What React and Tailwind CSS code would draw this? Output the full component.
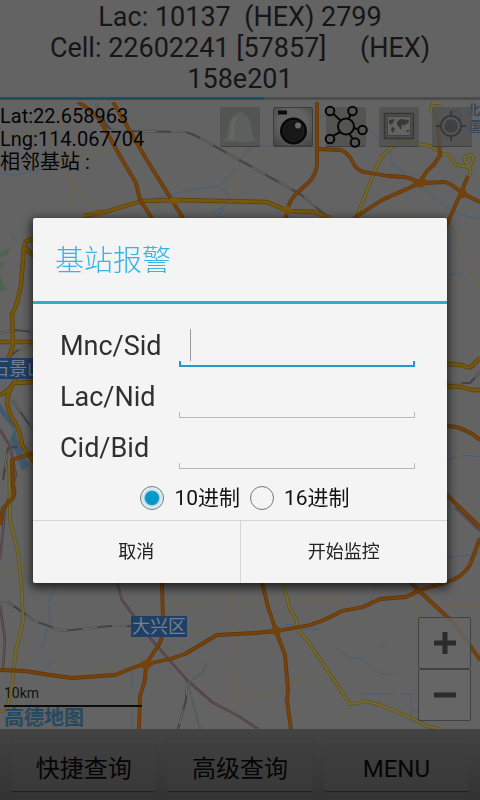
import { useState } from "react";

const ORANGE_ROADS = [
  "M78 102 L90 110 L100 120 L120 156 L136 183 L140 200 L152 218",
  "M113 102 L145 157 L183 218",
  "M317 102 V165 Q316 175 308 183 L295 195 Q287 204 286 218",
  "M318 149 L340 150 Q348 152 352 161 Q357 171 364 172 L388 176 L405 177 L424 183 L445 182 Q452 184 462 193 L480 202",
  "M438 122 L440 155 Q434 166 428 170 L418 184 L382 200 L354 218",
  "M468 176 L460 195 L446 226",
  "M33 453 L12 460 L13 485 Q16 492 13 498 L3 508 L0 525",
  "M0 670 L25 671 L50 675 L72 678 L115 675 L135 667 L146 664 L170 659 L185 654 L217 635 L255 633 L277 631 L310 625 L324 620 L342 611 L363 607 L380 599 L406 597 L420 590 L447 582 Q462 578 470 565 L480 538",
  "M162 582 L163 622 Q164 640 156 649 L146 664 L145 680 L140 696 L139 729",
  "M262 582 L268 607 L276 631 L285 655 L288 690 L287 700 L291 729",
  "M410 582 L430 601 L455 624 L480 660",
  "M447 426 Q464 426 480 440",
  "M447 495 L480 527",
];

const YELLOW_ROADS = [
  "M84 216 L105 212 L142 201 L175 200 L267 202 L288 211 L314 212 L330 218",
  "M34 239 Q25 239 24 247 L21 285 Q18 304 12 314 L13 345 L9 358 L15 381 Q8 390 7 402 Q9 415 15 422 Q21 433 22 445 L34 462",
  "M0 342 H34",
  "M34 382 L14 383 Q8 392 0 395",
  "M24 247 L34 256",
  "M447 364 L462 365 Q470 370 474 364 L480 358",
  "M447 386 L462 387 L472 390 H480",
];

const LIGHT_ROADS = [
  "M356 218 L362 203 L376 168 Q381 157 386 152 L400 141 L430 146 L443 154 L449 155 L456 165 L469 167 Q477 156 470 155 Q461 157 466 163 Q472 168 470 177",
  "M441 103 H433 L431 110 L438 122",
  "M9 459 L10 520 L18 553 L22 590 L23 622 L16 650 L12 686 L7 709 L0 712",
  "M283 582 L290 610 L296 618 L298 630 L308 641 L330 674 L350 704 Q358 704 365 701 L380 705 L410 717 L426 726 L440 729",
];

const FAINT_ROADS = [
  "M0 138 L48 130 L80 112",
  "M49 130 L58 160 L70 178 L97 213",
  "M72 180 L74 218",
  "M58 165 L110 151 L142 141",
  "M240 102 L237 175 L235 218",
  "M366 102 L385 132 M405 102 L404 140",
  "M390 176 L402 200 L409 218",
  "M447 228 Q459 227 461 238 L463 249 Q469 262 471 278 L480 291",
  "M165 604 L190 606 L205 603 L235 603 L240 606 L290 601 L340 601 L348 582",
  "M230 585 L231 603 L238 645 L235 729",
  "M187 633 L215 634",
  "M70 674 L100 670 L140 662",
  "M240 700 L256 700 L310 676 L330 674",
  "M350 704 L339 729",
  "M402 585 L415 607 L480 605",
  "M415 607 L420 640 L429 660 V729",
  "M0 653 L24 665",
  "M0 572 L33 568",
  "M447 470 L473 442",
];

const WATER = [
  "M0 173 L15 175 L45 169",
  "M150 200 L190 190 L220 186 L235 171 L245 153 L254 146 L318 146",
  "M320 116 L350 119 L370 130 L382 143 L390 152 L392 164 L412 177 L440 203 L458 214 L480 219",
  "M222 187 L232 202 M228 204 L213 213 M224 205 L218 217",
  "M449 275 L461 273 L469 281",
  "M447 460 L463 455 L480 457",
  "M447 557 L463 556 L480 553",
  "M337 648 L350 658 L360 658 L380 674 L395 675",
  "M275 629 L290 624 L300 629 L322 629",
  "M378 647 L387 644",
  "M361 694 H394 M400 694 H411 V710 H420",
  "M57 583 L48 603 L50 620 L42 648",
  "M55 658 L40 676 M36 690 L21 729",
  "M132 672 V690 M132 709 V727",
  "M380 582 L370 601",
  "M11 232 L14 240",
];

const RAILS = [
  "M96 104 L105 122 Q108 131 120 131 L185 132 Q191 133 200 138 L300 194 L329 218",
  "M0 333 L15 330 L33 332",
  "M33 346 L18 350 L9 357",
  "M447 383 H470 L480 372",
  "M0 602 H8 L35 621 L62 631 L110 626 H132",
  "M187 680 L186 700 L178 729",
  "M12 400 L33 430",
  "M33 445 L8 448 L3 480",
];

const RED_RAILS = [
  "M0 430 L10 446 L16 475 L5 510 L0 560",
  "M117 582 L122 600 L150 638 L187 680 L212 702 L240 717 L258 729",
  "M0 605 L5 640 L3 670",
  "M455 507 L480 531",
];

function Roads({ paths, ...stroke }) {
  return (
    <g fill="none" strokeLinejoin="round" {...stroke}>
      {paths.map((d) => (
        <path key={d} d={d} />
      ))}
    </g>
  );
}

function MapCanvas() {
  return (
    <svg
      className="absolute inset-0 h-full w-full"
      viewBox="0 102 480 627"
      preserveAspectRatio="xMidYMid slice"
      aria-hidden="true"
    >
      <path
        d="M0 252 L10 248 L7 255 L0 257Z M0 262 L4 264 L3 268 L0 267Z M0 274 L3 284 L7 290 L0 291Z"
        fill="#4f634e"
      />
      <path
        d="M0 404 L13 422 L17 438 L22 450 L29 466 L22 471 L17 456 L10 440 L14 430 L0 412Z"
        fill="#3f586d"
      />
      <Roads paths={WATER} stroke="#485f76" strokeWidth="1" />
      <Roads paths={FAINT_ROADS} stroke="#6b6450" strokeWidth="1.4" />
      <Roads paths={RAILS} stroke="#444444" strokeWidth="2.2" />
      <Roads
        paths={RAILS}
        stroke="#747474"
        strokeWidth="1"
        strokeDasharray="15 15"
      />
      <Roads paths={RED_RAILS} stroke="#4b393c" strokeWidth="2.4" />
      <Roads paths={RED_RAILS} stroke="#705f62" strokeWidth="0.8" />
      <path
        d="M207 663 L203 672 L188 683 L200 729"
        fill="none"
        stroke="#565c5b"
        strokeWidth="2.5"
        strokeDasharray="5 1"
      />
      <Roads paths={LIGHT_ROADS} stroke="#5c531d" strokeWidth="3.4" />
      <Roads paths={LIGHT_ROADS} stroke="#746a32" strokeWidth="2" />
      <Roads paths={YELLOW_ROADS} stroke="#5a4106" strokeWidth="4.4" />
      <Roads paths={YELLOW_ROADS} stroke="#76570d" strokeWidth="3" />
      <Roads paths={ORANGE_ROADS} stroke="#5e3408" strokeWidth="3.8" />
      <Roads paths={ORANGE_ROADS} stroke="#74420d" strokeWidth="2.6" />
      <g fill="#74420d">
        <path d="M412 183 L424 178 L430 183 L420 188Z" />
        <path d="M456 189 L464 188 L468 194 L462 199Z" />
        <path d="M138 664 L147 659 L155 663 L146 671Z" />
        <path d="M269 631 L276 625 L283 630 L277 637Z" />
      </g>
      <g fill="#76570d">
        <path d="M90 214 L98 209 L107 213 L98 217Z" />
        <path d="M166 201 L175 196 L181 202 L174 204Z" />
        <path d="M280 208 L288 205 L294 212 L287 215Z" />
      </g>

      {/* City marker */}
      <circle cx="455" cy="116" r="7" fill="#2d4a68" />
      <path d="M451 117 L458 111 M455 120 L459 113" stroke="#647384" strokeWidth="1.5" />

      <g fontFamily="'Noto Sans CJK SC', sans-serif">
        <text x="467" y="114" fontSize="13" fill="#26394e">
          北
        </text>
        <path d="M480 120.5 H470.5 V132.5 H480" fill="none" stroke="#34475c" />
        <text x="470" y="130" fontSize="10" fill="#26394e">
          国
        </text>
        <rect x="-10" y="358" width="60" height="21" fill="#1f4064" />
        <text x="-9" y="375" fontSize="18" fill="#74808d">
          石景山
        </text>
        <rect x="131" y="616" width="56" height="21" fill="#1f4064" />
        <text x="132" y="633" fontSize="18" fill="#74808d">
          大兴区
        </text>
      </g>
    </svg>
  );
}

function BellIcon() {
  return (
    <svg viewBox="0 0 40 40" className="h-10 w-10" aria-hidden="true">
      <path
        d="M16 8 Q16 5 20 5 Q24 5 24 8 C31 10 31 17 32 24 Q33 30 37 34 Q30 35 20 35 Q10 35 3 34 Q7 30 8 24 C9 17 9 10 16 8Z"
        fill="#5c5f5d"
      />
      <path
        d="M15 10 C11 13 11 20 11 25 Q10 30 8 32 Q12 33 15 32 Q12 22 17 10Z"
        fill="#646765"
      />
    </svg>
  );
}

function CameraIcon() {
  return (
    <svg viewBox="0 0 40 40" className="h-10 w-10" aria-hidden="true">
      <defs>
        <radialGradient id="body" cx="0.5" cy="0.4" r="0.7">
          <stop offset="0.5" stopColor="#626262" />
          <stop offset="1" stopColor="#474747" />
        </radialGradient>
      </defs>
      <rect x="0.5" y="0.5" width="39" height="38.5" rx="2" fill="url(#body)" stroke="#3c3c3c" />
      <rect x="5" y="3.5" width="9" height="4" fill="#0c0c0c" />
      <circle cx="20.5" cy="24" r="13.5" fill="#080808" />
      <circle cx="20.5" cy="24" r="10.5" fill="#171717" stroke="#222222" />
      <circle cx="25" cy="18.5" r="3" fill="#6a6a6a" />
    </svg>
  );
}

function NetworkIcon() {
  return (
    <svg viewBox="0 0 40 40" className="h-10 w-10 overflow-visible" aria-hidden="true">
      <g fill="none" stroke="#060606" strokeWidth="2">
        <path d="M7.5 7 L14.5 13.5 M24.5 8 L22.5 12 M27.5 21 L31.5 22 M14.5 25 L7.5 28.5 M23.5 27 L26.5 31.5" />
        <circle cx="20" cy="19.5" r="8" />
        <circle cx="4" cy="4" r="4.3" />
        <circle cx="26.5" cy="4" r="4.3" />
        <circle cx="36.5" cy="23" r="4.3" />
        <circle cx="4" cy="32" r="4.3" />
        <circle cx="29" cy="35.5" r="4.3" />
      </g>
    </svg>
  );
}

function WorldMapIcon() {
  return (
    <svg viewBox="0 0 40 40" className="h-10 w-10" aria-hidden="true">
      <rect x="5.5" y="6.5" width="29" height="25" fill="#4d4d4c" stroke="#363636" strokeWidth="1.5" />
      <rect x="8.5" y="9.5" width="23" height="19" fill="#636362" stroke="#424242" />
      <path
        d="M10 13 L16 12 L14 16 L12 18 L10 16Z M13 20 L16 21 L14 26 L12 23Z M18 15 L21 12 L30 13 L29 17 L27 16 L26 19 L23 17 L22 23 L20 20 L18 18Z M27 23 L30 23 L29 26Z"
        fill="#393939"
      />
    </svg>
  );
}

function LocateIcon() {
  return (
    <svg viewBox="0 0 40 40" className="h-10 w-10" aria-hidden="true">
      <path d="M19 4 V10 M19 28 V34 M4 19 H10 M28 19 H34" stroke="#36383a" strokeWidth="2" />
      <circle cx="19" cy="19" r="10" fill="#5a5b5c" stroke="#36383a" strokeWidth="2" />
      <circle cx="19" cy="19" r="7" fill="#3e4041" stroke="#4a4c4d" />
    </svg>
  );
}

const TOOLS = [
  { label: "报警", Icon: BellIcon },
  { label: "拍照", Icon: CameraIcon },
  { label: "邻区", Icon: NetworkIcon },
  { label: "地图", Icon: WorldMapIcon },
  { label: "定位", Icon: LocateIcon },
];

const FIELDS = [
  { id: "mnc", label: "Mnc/Sid" },
  { id: "lac", label: "Lac/Nid" },
  { id: "cid", label: "Cid/Bid" },
];

const RADIXES = [
  { value: "10", label: "10进制" },
  { value: "16", label: "16进制" },
];

const ACTIONS = ["快捷查询", "高级查询", "MENU"];

function AlarmDialog() {
  const [values, setValues] = useState({ mnc: "", lac: "", cid: "" });
  const [active, setActive] = useState("mnc");
  const [radix, setRadix] = useState("10");

  return (
    <div
      role="dialog"
      aria-labelledby="alarm-title"
      className="w-full max-w-lg rounded-xs bg-[#f4f4f4] shadow-[0_3px_10px_2px_rgba(0,0,0,0.65)]"
    >
      <h2
        id="alarm-title"
        className="border-b-3 border-[#33a9d6] px-[22px] pt-[23px] pb-5 text-[29px] leading-[40px] font-light text-[#33b5e5]"
      >
        基站报警
      </h2>

      <form onSubmit={(e) => e.preventDefault()}>
        <div className="pt-3 pr-8 pl-[27px]">
          {FIELDS.map(({ id, label }) => (
            <div key={id} className="flex h-[51px] items-end">
              <label
                htmlFor={id}
                className="w-[119px] shrink-0 pb-1 text-[27px] leading-[34px] text-[#303030]"
              >
                {label}
              </label>
              <div className="min-w-0 flex-1">
                <div className="flex h-8 items-center pl-[11px]">
                  {active === id && !values[id] && (
                    <span className="h-8 w-px bg-[#9a9a9a]" />
                  )}
                  <input
                    id={id}
                    type="text"
                    value={values[id]}
                    onFocus={() => setActive(id)}
                    onChange={(e) =>
                      setValues({ ...values, [id]: e.target.value })
                    }
                    className="h-8 w-full min-w-0 bg-transparent text-[27px] text-[#303030] outline-none"
                  />
                </div>
                <div
                  className={
                    active === id
                      ? "h-[6px] border-x-2 border-b-2 border-[#1d9bc9]"
                      : "h-[6px] border-x border-b border-[#b9b9b9]"
                  }
                />
              </div>
            </div>
          ))}
        </div>

        <div className="flex h-[51px] items-center justify-center gap-[10px] pt-2 pl-[10px]">
          {RADIXES.map(({ value, label }) => (
            <label
              key={value}
              className="flex items-center gap-[10px] text-[21px] leading-[28px] text-[#111]"
            >
              <input
                type="radio"
                name="radix"
                value={value}
                checked={radix === value}
                onChange={() => setRadix(value)}
                className="h-6 w-6 appearance-none rounded-full border border-[#777] checked:bg-[radial-gradient(circle,#0099cc_0_6px,#5b9fb8_7px,#c5e8f5_8px,#e2f2f8_11px)]"
              />
              {label}
            </label>
          ))}
        </div>

        <div className="flex border-t border-[#d6d6d6]">
          <button
            type="button"
            className="h-[62px] flex-1 border-r border-[#d6d6d6] text-lg text-[#222]"
          >
            取消
          </button>
          <button type="submit" className="h-[62px] flex-1 text-lg text-[#222]">
            开始监控
          </button>
        </div>
      </form>
    </div>
  );
}

export default function App() {
  return (
    <div className="flex min-h-screen flex-col bg-[#636363] font-[Roboto,'Noto_Sans_CJK_SC',sans-serif] text-black">
      {/* Current cell */}
      <header className="pt-[2px]">
        <h1 className="text-center text-[27px] leading-[31px] whitespace-pre-wrap text-[#161616]">
          {"Lac: 10137  (HEX) 2799\nCell: 22602241 [57857]     (HEX)\n158e201"}
        </h1>
        <div className="mt-[2px] mb-[2px] h-[3px] bg-[#4c4c4c]">
          <div className="h-full w-[55%] bg-[#1c4f63]" />
        </div>
      </header>

      {/* Map */}
      <main className="relative flex flex-1 flex-col justify-between overflow-hidden">
        <MapCanvas />

        <div className="relative flex items-start justify-between pt-[3px] pr-2">
          <div className="text-[20px] leading-[23px] text-[#050505]">
            <p>Lat:22.658963</p>
            <p>Lng:114.067704</p>
            <p>相邻基站 :</p>
          </div>
          <div className="flex gap-[13px] pt-[2px]">
            {TOOLS.map(({ label, Icon }) => (
              <button
                key={label}
                type="button"
                aria-label={label}
                className="h-10 w-10 rounded-xs border-b border-[#3e3e3e] bg-[#50504f]/80"
              >
                <Icon />
              </button>
            ))}
          </div>
        </div>

        <div className="relative flex items-end justify-between pr-[9px] pl-1">
          <div className="w-[138px]">
            <p className="border-b-2 border-[#0c0c0c] pb-[3px] text-sm leading-[18px] text-[#111]">
              10km
            </p>
            <p className="text-[20px] leading-[22px] font-bold text-[#264962]">
              高德地图
            </p>
          </div>
          <div className="mb-2 flex w-[53px] flex-col">
            <button
              type="button"
              aria-label="放大"
              className="flex h-[52px] items-center justify-center rounded-xs border border-[#414141] bg-[#666]/80"
            >
              <svg viewBox="0 0 22 22" className="h-[22px] w-[22px]" aria-hidden="true">
                <path d="M11 0 V22 M0 11 H22" stroke="#2b2b2b" strokeWidth="5" />
              </svg>
            </button>
            <button
              type="button"
              aria-label="缩小"
              className="flex h-[52px] items-center justify-center rounded-xs border border-[#414141] bg-[#666]/80"
            >
              <svg viewBox="0 0 22 22" className="h-[22px] w-[22px]" aria-hidden="true">
                <path d="M0 11 H22" stroke="#2b2b2b" strokeWidth="5" />
              </svg>
            </button>
          </div>
        </div>
      </main>

      {/* Bottom actions */}
      <nav className="relative flex gap-[11px] bg-linear-to-b from-[#434343] to-[#333] px-[11px] pt-3 pb-2">
        {ACTIONS.map((action) => (
          <button
            key={action}
            type="button"
            className="h-[51px] flex-1 rounded-xs border-t border-b border-t-[#474747] border-b-[#222] bg-linear-to-b from-[#3f3f3f] to-[#393939] pt-1 text-2xl text-[#050505] shadow-[0_0_1px_#2a2a2a]"
          >
            {action}
          </button>
        ))}
      </nav>

      <div className="fixed inset-0 z-10 flex items-center justify-center px-[33px]">
        <AlarmDialog />
      </div>
    </div>
  );
}
